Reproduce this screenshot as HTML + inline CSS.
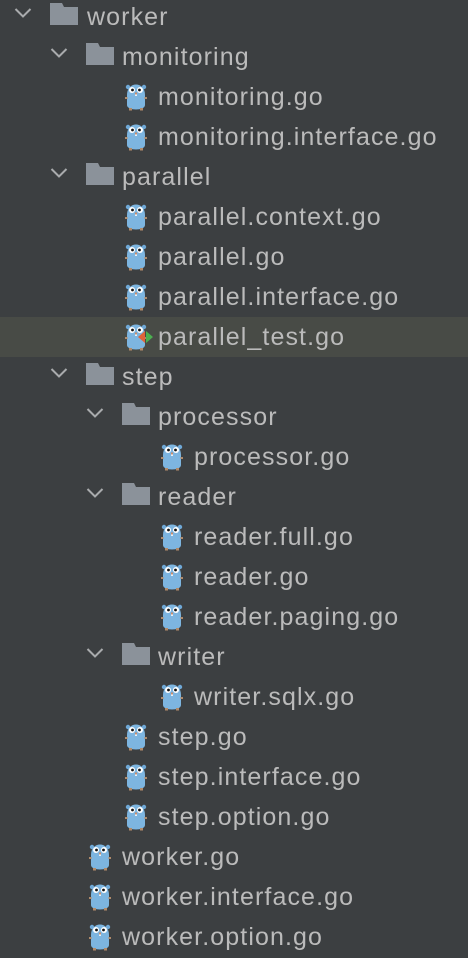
<!DOCTYPE html>
<html><head><style>
body{margin:0;width:468px;height:958px;background:#3c3f41;overflow:hidden;font-family:"Liberation Sans",sans-serif;}
.r{position:absolute;left:0;width:468px;height:40px;}
.t{position:absolute;top:6px;font-size:25px;letter-spacing:1.1px;color:#bbbbbb;line-height:28px;white-space:nowrap;}
.c{position:absolute;top:10px;}
.f{position:absolute;top:6px;}
.g{position:absolute;top:4px;}
.hl{background:#484b46;}
</style></head><body>
<svg width="0" height="0" style="position:absolute">
<defs>
<symbol id="chev" viewBox="0 0 18 12"><path d="M1.5 2 L9 9.5 L16.5 2" fill="none" stroke="#a9abad" stroke-width="2"/></symbol>
<symbol id="fold" viewBox="0 0 28 22"><path d="M0 0 H12 L14 4 H28 V22 H0 Z" fill="#8b929a"/></symbol>
<symbol id="goph" viewBox="0 0 22 30">
<ellipse cx="3" cy="6" rx="2.2" ry="2.2" fill="#6fa8d6"/><ellipse cx="19" cy="6" rx="2.2" ry="2.2" fill="#6fa8d6"/>
<path d="M2 14 C2 0 20 0 20 14 V24 C20 30 2 30 2 24 Z" fill="#7db5e0"/>
<rect x="0" y="16" width="2.5" height="2" fill="#b08a6a"/><rect x="19.5" y="16" width="2.5" height="2" fill="#b08a6a"/>
<rect x="4" y="27" width="3" height="2.5" fill="#b08a6a"/><rect x="15" y="27" width="3" height="2.5" fill="#b08a6a"/>
<circle cx="7" cy="9" r="3" fill="#fff"/><circle cx="15" cy="9" r="3" fill="#fff"/>
<circle cx="7.5" cy="9" r="1.4" fill="#111"/><circle cx="14.5" cy="9" r="1.4" fill="#111"/>
<rect x="10" y="11.5" width="2" height="2" fill="#c98b6a"/><rect x="10.2" y="13.4" width="1.6" height="1.6" fill="#fff"/>
</symbol>
</defs></svg>

<div class="r" style="top:-3px"><svg class="c" style="left:14px" width="18" height="12"><use href="#chev"/></svg><svg class="f" style="left:50px" width="28" height="22"><use href="#fold"/></svg><span class="t" style="left:87px">worker</span></div>
<div class="r" style="top:37px"><svg class="c" style="left:50px" width="18" height="12"><use href="#chev"/></svg><svg class="f" style="left:86px" width="28" height="22"><use href="#fold"/></svg><span class="t" style="left:122px">monitoring</span></div>
<div class="r" style="top:77px"><svg class="g" style="left:125px" width="22" height="30"><use href="#goph"/></svg><span class="t" style="left:158px">monitoring.go</span></div>
<div class="r" style="top:117px"><svg class="g" style="left:125px" width="22" height="30"><use href="#goph"/></svg><span class="t" style="left:158px">monitoring.interface.go</span></div>
<div class="r" style="top:157px"><svg class="c" style="left:50px" width="18" height="12"><use href="#chev"/></svg><svg class="f" style="left:86px" width="28" height="22"><use href="#fold"/></svg><span class="t" style="left:122px">parallel</span></div>
<div class="r" style="top:197px"><svg class="g" style="left:125px" width="22" height="30"><use href="#goph"/></svg><span class="t" style="left:158px">parallel.context.go</span></div>
<div class="r" style="top:237px"><svg class="g" style="left:125px" width="22" height="30"><use href="#goph"/></svg><span class="t" style="left:158px">parallel.go</span></div>
<div class="r" style="top:277px"><svg class="g" style="left:125px" width="22" height="30"><use href="#goph"/></svg><span class="t" style="left:158px">parallel.interface.go</span></div>
<div class="r hl" style="top:317px"><svg class="g" style="left:125px" width="22" height="30"><use href="#goph"/></svg><svg style="position:absolute;left:138px;top:13px" width="16" height="14"><path d="M0 7 L7 1 V13 Z" fill="#e0643a"/><path d="M8 1 L15 7 L8 13 Z" fill="#4caf50"/></svg><span class="t" style="left:158px">parallel_test.go</span></div>
<div class="r" style="top:357px"><svg class="c" style="left:50px" width="18" height="12"><use href="#chev"/></svg><svg class="f" style="left:86px" width="28" height="22"><use href="#fold"/></svg><span class="t" style="left:122px">step</span></div>
<div class="r" style="top:397px"><svg class="c" style="left:86px" width="18" height="12"><use href="#chev"/></svg><svg class="f" style="left:122px" width="28" height="22"><use href="#fold"/></svg><span class="t" style="left:158px">processor</span></div>
<div class="r" style="top:437px"><svg class="g" style="left:161px" width="22" height="30"><use href="#goph"/></svg><span class="t" style="left:194px">processor.go</span></div>
<div class="r" style="top:477px"><svg class="c" style="left:86px" width="18" height="12"><use href="#chev"/></svg><svg class="f" style="left:122px" width="28" height="22"><use href="#fold"/></svg><span class="t" style="left:158px">reader</span></div>
<div class="r" style="top:517px"><svg class="g" style="left:161px" width="22" height="30"><use href="#goph"/></svg><span class="t" style="left:194px">reader.full.go</span></div>
<div class="r" style="top:557px"><svg class="g" style="left:161px" width="22" height="30"><use href="#goph"/></svg><span class="t" style="left:194px">reader.go</span></div>
<div class="r" style="top:597px"><svg class="g" style="left:161px" width="22" height="30"><use href="#goph"/></svg><span class="t" style="left:194px">reader.paging.go</span></div>
<div class="r" style="top:637px"><svg class="c" style="left:86px" width="18" height="12"><use href="#chev"/></svg><svg class="f" style="left:122px" width="28" height="22"><use href="#fold"/></svg><span class="t" style="left:158px">writer</span></div>
<div class="r" style="top:677px"><svg class="g" style="left:161px" width="22" height="30"><use href="#goph"/></svg><span class="t" style="left:194px">writer.sqlx.go</span></div>
<div class="r" style="top:717px"><svg class="g" style="left:125px" width="22" height="30"><use href="#goph"/></svg><span class="t" style="left:158px">step.go</span></div>
<div class="r" style="top:757px"><svg class="g" style="left:125px" width="22" height="30"><use href="#goph"/></svg><span class="t" style="left:158px">step.interface.go</span></div>
<div class="r" style="top:797px"><svg class="g" style="left:125px" width="22" height="30"><use href="#goph"/></svg><span class="t" style="left:158px">step.option.go</span></div>
<div class="r" style="top:837px"><svg class="g" style="left:89px" width="22" height="30"><use href="#goph"/></svg><span class="t" style="left:122px">worker.go</span></div>
<div class="r" style="top:877px"><svg class="g" style="left:89px" width="22" height="30"><use href="#goph"/></svg><span class="t" style="left:122px">worker.interface.go</span></div>
<div class="r" style="top:917px"><svg class="g" style="left:89px" width="22" height="30"><use href="#goph"/></svg><span class="t" style="left:122px">worker.option.go</span></div>
</body></html>
